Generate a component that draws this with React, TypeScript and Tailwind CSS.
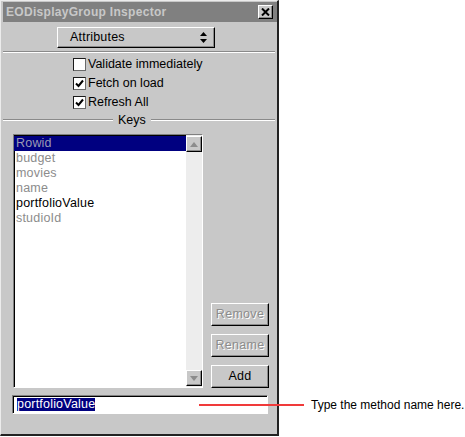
import React from 'react';

const KEYS = [
  { name: 'Rowid', selected: true, enabled: false },
  { name: 'budget', selected: false, enabled: false },
  { name: 'movies', selected: false, enabled: false },
  { name: 'name', selected: false, enabled: false },
  { name: 'portfolioValue', selected: false, enabled: true },
  { name: 'studioId', selected: false, enabled: false },
];

const OPTIONS = [
  { label: 'Validate immediately', checked: false },
  { label: 'Fetch on load', checked: true },
  { label: 'Refresh All', checked: true },
];

const raised =
  'border-t border-l border-t-white border-l-white border-r border-b border-r-black border-b-black shadow-[inset_-1px_-1px_0_#8a8a8a]';
const sunken =
  'border-t border-l border-t-[#808080] border-l-[#808080] border-r border-b border-r-white border-b-white shadow-[inset_1px_1px_0_#000]';

function Groove() {
  return <div className="h-[2px] border-t border-t-[#8a8a8a] border-b border-b-white" />;
}

function Check({ checked }: { checked: boolean }) {
  return (
    <span className="w-[13px] h-[13px] bg-white border border-[#1a1a1a] border-r-[#6a6a6a] border-b-[#6a6a6a] flex items-center justify-center">
      {checked && (
        <svg width="9" height="9" viewBox="0 0 9 9">
          <path d="M1 4.5 L3.5 7 L8 1.5" fill="none" stroke="#000" strokeWidth="2" />
        </svg>
      )}
    </span>
  );
}

function Arrow({ up }: { up: boolean }) {
  return (
    <div className={`w-[16px] h-[16px] bg-[#c8c8c8] flex items-center justify-center ${raised}`}>
      <svg width="8" height="5" viewBox="0 0 8 5">
        <path d={up ? 'M0 5 L4 0 L8 5 Z' : 'M0 0 L4 5 L8 0 Z'} fill="#8c8c8c" />
      </svg>
    </div>
  );
}

function Button({ label, enabled }: { label: string; enabled: boolean }) {
  return (
    <div
      className={`w-[58px] h-[23px] bg-[#c8c8c8] flex items-center justify-center text-[12.5px] tracking-[0.3px] ${raised} ${
        enabled ? 'text-black' : 'text-[#8c8c8c] [text-shadow:1px_1px_0_#fff]'
      }`}
    >
      {label}
    </div>
  );
}

export default function App() {
  return (
    <div className="relative w-[465px] h-[437px] bg-white font-['Liberation_Sans',Arial,sans-serif] text-[12px] leading-none">
      {/* Inspector window */}
      <div className="w-[279px] h-[436px] bg-[#c8c8c8] flex flex-col border-t border-l border-t-[#ececec] border-l-[#ececec] border-r-2 border-b-2 border-r-[#222] border-b-[#222]">
        {/* Title bar */}
        <div className="ml-[2px] mt-[1px] h-[20px] bg-[#808080] flex items-center justify-between">
          <span className="pl-[3px] text-[12px] font-bold tracking-[0.3px] text-[#c8c8c8]">EODisplayGroup Inspector</span>
          <div className={`mr-[4px] w-[15px] h-[14px] bg-[#c8c8c8] flex items-center justify-center ${raised}`}>
            <svg width="9" height="8" viewBox="0 0 9 8">
              <path d="M1 0.5 L8 7.5 M8 0.5 L1 7.5" stroke="#000" strokeWidth="2" />
            </svg>
          </div>
        </div>

        {/* Popup */}
        <div className={`mt-[5px] ml-[56px] w-[158px] h-[21px] bg-[#c8c8c8] flex items-center justify-between pl-[12px] pr-[7px] ${raised}`}>
          <span className="text-[12.5px] tracking-[0.2px]">Attributes</span>
          <svg width="7" height="11" viewBox="0 0 7 11">
            <path d="M0 4 L3.5 0 L7 4 Z M0 7 L3.5 11 L7 7 Z" fill="#000" />
          </svg>
        </div>

        <div className="mt-[3px] mx-[2px]">
          <Groove />
        </div>

        {/* Options */}
        <div className="mt-[2px] flex flex-col">
          {OPTIONS.map((o) => (
            <div key={o.label} className="h-[19px] pl-[72px] flex items-center gap-[2px]">
              <Check checked={o.checked} />
              <span className="text-[12.5px]">{o.label}</span>
            </div>
          ))}
        </div>

        {/* Keys separator */}
        <div className="mt-[1px] ml-[2px] mr-[2px] h-[14px] flex items-center">
          <div className="w-[110px]">
            <Groove />
          </div>
          <span className="px-[5px] text-[12.5px]">Keys</span>
          <div className="flex-1">
            <Groove />
          </div>
        </div>

        {/* List + buttons */}
        <div className="mt-[7px] ml-[12px] flex items-end gap-[8px]">
          <div className={`w-[190px] h-[254px] bg-white flex ${sunken}`}>
            <div className="flex-1 pt-[1px] flex flex-col">
              {KEYS.map((k) => (
                <div
                  key={k.name}
                  className={`h-[15px] pl-[2px] flex items-center text-[12.5px] tracking-[0.2px] ${
                    k.selected ? 'bg-[#000080] text-[#9a9ab4]' : k.enabled ? 'text-black' : 'text-[#8c8c8c]'
                  }`}
                >
                  {k.name}
                </div>
              ))}
            </div>
            <div className="w-[16px] bg-[#ededed] flex flex-col justify-between pt-[1px] pb-[1px]">
              <Arrow up />
              <Arrow up={false} />
            </div>
          </div>
          <div className="flex flex-col gap-[8px]">
            <Button label="Remove" enabled={false} />
            <Button label="Rename" enabled={false} />
            <Button label="Add" enabled />
          </div>
        </div>

        {/* Method name field */}
        <div className={`mt-[7px] ml-[11px] w-[256px] h-[19px] bg-white flex items-center pl-[4px] ${sunken}`}>
          <span className="bg-[#000080] text-white text-[12.5px] tracking-[0.2px] h-[13px] flex items-center">portfolioValue</span>
        </div>
      </div>

      {/* Callout */}
      <div className="absolute left-[199px] top-[404px] w-[105px] h-[2px] bg-[#f03a3a]" />
      <span className="absolute left-[311px] top-[399px] text-[12px] text-black">Type the method name here.</span>
    </div>
  );
}
